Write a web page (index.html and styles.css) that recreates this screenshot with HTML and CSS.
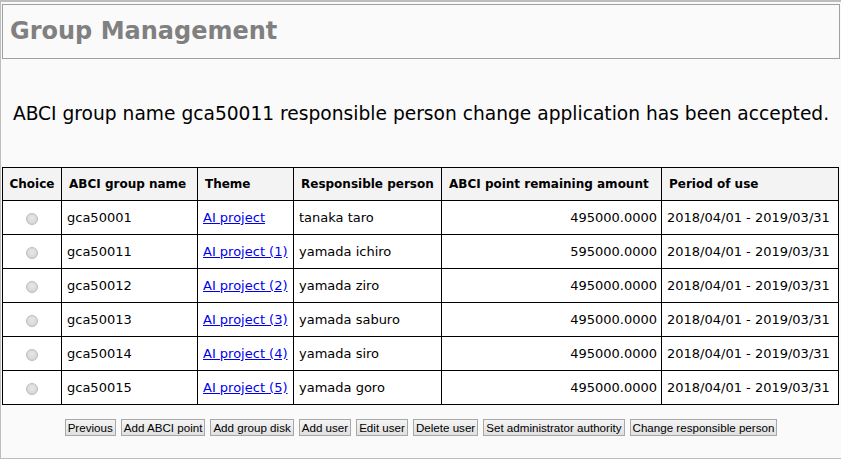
FILE: index.html
```html
<!DOCTYPE html>
<html>
<head>
<meta charset="utf-8">
<link rel="stylesheet" href="styles.css">
</head>
<body>
<div class="page">
  <div class="header"><h1 class="title">Group Management</h1></div>
  <p class="message">ABCI group name gca50011 responsible person change application has been accepted.</p>
  <table class="grid">
    <colgroup>
      <col class="c1"><col class="c2"><col class="c3"><col class="c4"><col class="c5"><col class="c6">
    </colgroup>
    <thead>
      <tr><th class="center">Choice</th><th>ABCI group name</th><th>Theme</th><th>Responsible person</th><th>ABCI point remaining amount</th><th>Period of use</th></tr>
    </thead>
    <tbody>
      <tr><td class="center"><span class="radio"></span></td><td>gca50001</td><td><a href="#">AI project</a></td><td>tanaka taro</td><td class="num">495000.0000</td><td>2018/04/01 - 2019/03/31</td></tr>
      <tr><td class="center"><span class="radio"></span></td><td>gca50011</td><td><a href="#">AI project (1)</a></td><td>yamada ichiro</td><td class="num">595000.0000</td><td>2018/04/01 - 2019/03/31</td></tr>
      <tr><td class="center"><span class="radio"></span></td><td>gca50012</td><td><a href="#">AI project (2)</a></td><td>yamada ziro</td><td class="num">495000.0000</td><td>2018/04/01 - 2019/03/31</td></tr>
      <tr><td class="center"><span class="radio"></span></td><td>gca50013</td><td><a href="#">AI project (3)</a></td><td>yamada saburo</td><td class="num">495000.0000</td><td>2018/04/01 - 2019/03/31</td></tr>
      <tr><td class="center"><span class="radio"></span></td><td>gca50014</td><td><a href="#">AI project (4)</a></td><td>yamada siro</td><td class="num">495000.0000</td><td>2018/04/01 - 2019/03/31</td></tr>
      <tr><td class="center"><span class="radio"></span></td><td>gca50015</td><td><a href="#">AI project (5)</a></td><td>yamada goro</td><td class="num">495000.0000</td><td>2018/04/01 - 2019/03/31</td></tr>
    </tbody>
  </table>
  <div class="buttons">
    <button class="btn">Previous</button>
    <button class="btn">Add ABCI point</button>
    <button class="btn">Add group disk</button>
    <button class="btn">Add user</button>
    <button class="btn">Edit user</button>
    <button class="btn">Delete user</button>
    <button class="btn">Set administrator authority</button>
    <button class="btn">Change responsible person</button>
  </div>
</div>
</body>
</html>
```
FILE: styles.css
```css
html, body {
  margin: 0;
  padding: 0;
  background: #fafafa;
}
.page {
  box-sizing: border-box;
  width: 841px;
  height: 459px;
  border-top: 2px solid #bdbdbd;
  border-left: 1px solid #bdbdbd;
  border-bottom: 1px solid #bdbdbd;
  background: #fafafa;
  font-family: "DejaVu Sans", Verdana, sans-serif;
  color: #000;
  overflow: hidden;
}
.header {
  margin: 2px 1px 0 1px;
  height: 53px;
  border: 1px solid #a0a0a0;
  display: flex;
  align-items: center;
  padding-left: 7px;
}
.title {
  margin: 0 0 2px 0;
  font-size: 24px;
  font-weight: bold;
  color: #808080;
  letter-spacing: 0;
}
.message {
  margin: 43px 0 0 0;
  text-align: center;
  font-size: 18.65px;
  line-height: 24px;
  letter-spacing: 0;
}
.grid {
  margin: 41px 0 0 1px;
  width: 836px;
  border-collapse: collapse;
  table-layout: fixed;
  font-size: 13px;
  background: #fff;
}
.c1 { width: 59px; }
.c2 { width: 136px; }
.c3 { width: 96px; }
.c4 { width: 148px; }
.c5 { width: 220px; }
.c6 { width: 177px; }
.grid th, .grid td {
  border: 1px solid #000;
  padding: 0 5px;
  text-align: left;
  white-space: nowrap;
  overflow: hidden;
}
.grid th {
  height: 32px;
  background: #f3f3f3;
  font-weight: bold;
  font-size: 12px;
  padding: 0 7px;
}
.grid td {
  height: 33px;
}
.grid .center { text-align: center; padding: 0; }
.grid .num { text-align: right; padding-right: 4px; }
.grid a { color: #0000ee; }
.radio {
  display: inline-block;
  width: 10px;
  height: 10px;
  border-radius: 50%;
  border: 1px solid #bdbdbd;
  background: radial-gradient(circle at 50% 40%, #e8e8e8, #cfcfcf);
  vertical-align: middle;
}
.buttons {
  margin-top: 14px;
  display: flex;
  justify-content: center;
  gap: 5px;
}
.btn {
  font-family: "Liberation Sans", Arial, sans-serif;
  font-size: 11.6px;
  height: 17px;
  padding: 0 2px;
  line-height: 15px;
  border: 1px solid #a8a8a8;
  border-radius: 0;
  background: linear-gradient(#f4f4f4, #e0e0e0);
  color: #000;
}
```
